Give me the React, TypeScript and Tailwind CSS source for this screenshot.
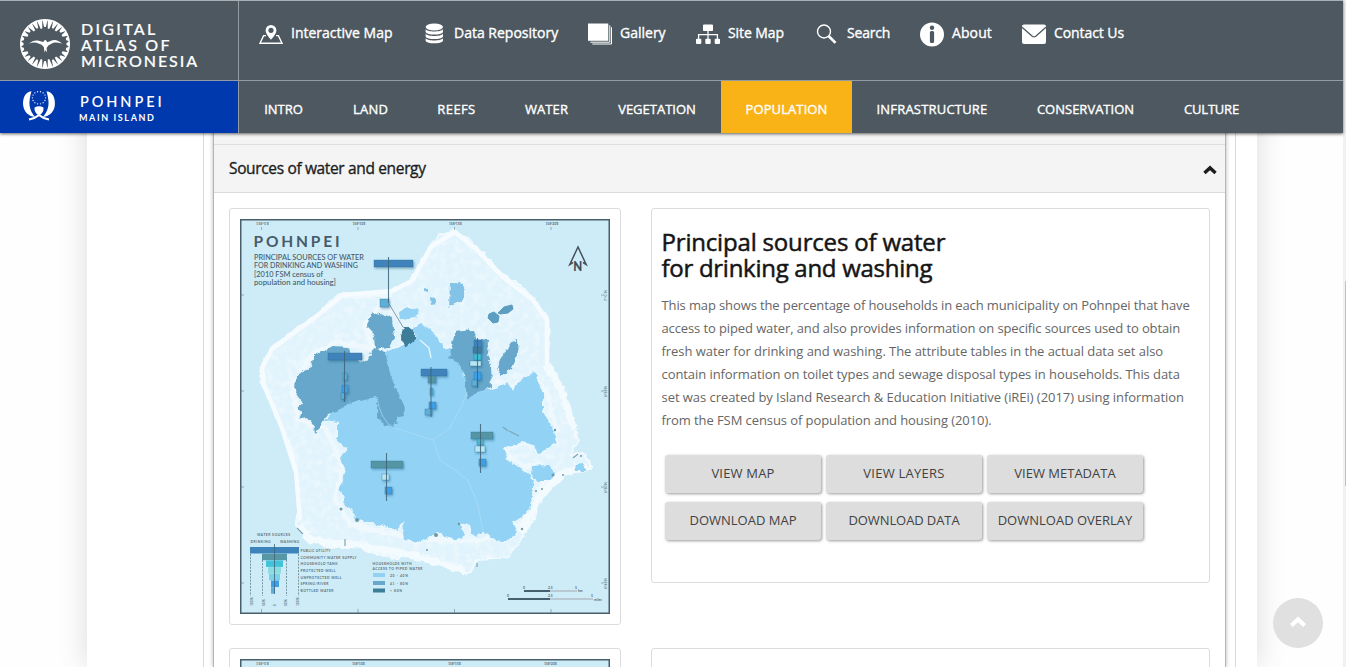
import type { ReactNode } from "react";

const teeth = Array.from({ length: 28 }, (_, i) => {
  const a = (i / 28) * Math.PI * 2;
  const len = 3 + 6 * Math.abs(Math.sin(a)) - (i % 2 ? 1.4 : 0);
  const p = (ang: number, r: number) =>
    `${(26 + Math.cos(ang) * r).toFixed(2)},${(26 + Math.sin(ang) * r).toFixed(2)}`;
  return `${p(a - 0.11, 24.5)} ${p(a + 0.11, 24.5)} ${p(a + 0.05, 24.5 - len)} ${p(a - 0.05, 24.5 - len)}`;
});

function AtlasLogo() {
  return (
    <svg className="h-[52px] w-[52px] shrink-0" viewBox="0 0 52 52" fill="#fff">
      <circle cx="26" cy="26" r="24.4" fill="none" stroke="#fff" strokeWidth="1.2" />
      {teeth.map((t) => (
        <polygon key={t} points={t} />
      ))}
      <path d="M9.5 25.8Q15 21.5 18.8 22.6L24.3 24Q25.6 21.3 27 22.2L28.3 24.2L33.5 22.3Q38 21 43 25.6Q37 23.8 34.4 24.8L29.6 27.2L27.6 30L28.1 34.6L26.5 32L25.6 34.6L24.8 29L22.6 26.8L17.6 24.8Q14 24 9.5 25.8Z" />
    </svg>
  );
}

const stars = Array.from({ length: 14 }, (_, i) => (i / 14) * Math.PI * 2);

function PohnpeiLogo() {
  return (
    <svg className="h-[32px] w-[34px] shrink-0" viewBox="0 0 34 32" fill="#fff">
      <path d="M9.5 1.2C3 1.5 .3 9 1.2 15.6C2 21.5 6 26.3 13 27C9.5 22.5 6.800 17.5 7.600 10.500C8 7 8.600 4 9.500 1.200Z" />
      <path d="M24.500 1.200C31 1.500 33.700 9 32.800 15.600C32 21.500 28 26.300 21 27C24.500 22.500 27.200 17.500 26.400 10.500C26 7 25.400 4 24.500 1.200Z" />
      <path d="M12.500 17.500Q17 15 21.500 17.500Q22 23 17 25.500Q12 23 12.500 17.500Z" />
      <path d="M7 29.500Q13 28.500 17 25Q21 28.500 27 29.500" fill="none" stroke="#fff" strokeWidth="2.200" />
      {stars.map((a) => (
        <circle key={a} cx={17 + Math.cos(a) * 6.6} cy={7.8 + Math.sin(a) * 6.2} r=".65" />
      ))}
    </svg>
  );
}

const icons: Record<string, ReactNode> = {
  map: (
    <>
      <path d="M12 2a5.400 5.400 0 0 0-5.400 5.400c0 3.400 5.400 9.300 5.400 9.300s5.400-5.900 5.400-9.300A5.400 5.400 0 0 0 12 2zm0 7.900a2.600 2.600 0 1 1 0-5.200 2.600 2.600 0 0 1 0 5.200z" fillRule="evenodd" />
      <path d="M7 12.600H4.600L1 20.300H23L19.400 12.600H17" fill="none" stroke="#fff" strokeWidth="1.400" />
    </>
  ),
  data: (
    <>
      <ellipse cx="12.300" cy="4" rx="8.700" ry="3.500" />
      <path d="M3.600 6.200c2 3 15.400 3 17.400 0v2.700c-1 3.500-16.400 3.500-17.400 0z" />
      <path d="M3.600 10.700c2 3 15.400 3 17.400 0v2.700c-1 3.500-16.400 3.500-17.400 0z" />
      <path d="M3.600 15.200c2 3 15.400 3 17.400 0v2.500c-1 3.500-16.400 3.500-17.400 0z" />
    </>
  ),
  gallery: (
    <>
      <path d="M0 .5H20.300V17.800H0z" />
      <path d="M21.800 2.300V19.200H2.300M23.500 4.200V21H4.300" fill="none" stroke="#fff" strokeWidth="1" />
    </>
  ),
  site: (
    <>
      <rect x="7" y="1.500" width="10" height="6.500" rx=".8" />
      <rect x="0" y="15.700" width="5.300" height="5.300" rx="1" />
      <rect x="9.300" y="15.700" width="5.400" height="5.300" rx="1" />
      <rect x="18.700" y="15.700" width="5.300" height="5.300" rx="1" />
      <path d="M12 7.500V16M2.600 16V11.600H21.400V16" fill="none" stroke="#fff" strokeWidth="1.300" />
    </>
  ),
  search: (
    <>
      <circle cx="9" cy="8.500" r="6.500" fill="none" stroke="#fff" strokeWidth="1.400" />
      <path d="M13.800 13.300L20.500 19.900" fill="none" stroke="#fff" strokeWidth="2.700" />
    </>
  ),
  about: (
    <>
      <circle cx="12" cy="11.500" r="12" />
      <circle cx="12" cy="4.700" r="2.200" fill="#4d5860" />
      <rect x="9.900" y="7.900" width="4.200" height="12.100" rx="1.500" fill="#4d5860" />
    </>
  ),
  mail: (
    <>
      <rect x="0" y="1.500" width="24" height="19.500" rx="2" />
      <path d="M0 4.200L10.300 13.300Q12 14.600 13.700 13.300L24 4.200" fill="none" stroke="#4d5860" strokeWidth="1.300" />
    </>
  ),
};

const links = [
  { icon: "map", label: "Interactive Map", cls: "w-[163px]" },
  { icon: "data", label: "Data Repository", cls: "w-[166px]" },
  { icon: "gallery", label: "Gallery", cls: "w-[108px]" },
  { icon: "site", label: "Site Map", cls: "w-[119px] tracking-[-0.07px]" },
  { icon: "search", label: "Search", cls: "w-[105px] tracking-[-0.2px]" },
  { icon: "about", label: "About", cls: "w-[102px] tracking-[0.1px]" },
  { icon: "mail", label: "Contact Us", cls: "tracking-[-0.08px]" },
];

const tabs = [
  { label: "INTRO", cls: "w-[89px]" },
  { label: "LAND", cls: "w-[85px] tracking-[0.2px]" },
  { label: "REEFS", cls: "w-[87px] tracking-[0.4px]" },
  { label: "WATER", cls: "w-[93px] tracking-[0.1px]" },
  { label: "VEGETATION", cls: "w-[128px]" },
  { label: "POPULATION", cls: "w-[131px] bg-[#fab317] tracking-[0.1px]" },
  { label: "INFRASTRUCTURE", cls: "w-[160px] tracking-[0.2px]" },
  { label: "CONSERVATION", cls: "w-[147px]" },
  { label: "CULTURE", cls: "w-[105px] tracking-[-0.2px]" },
];

function Header() {
  return (
    <header className="absolute left-0 top-0 z-10 w-[1343px] border-t border-[#a9b0b5] bg-[#4d5860] text-white shadow-[0_1px_3px_rgba(0,0,0,0.6)]">
      <div className="flex h-[80px] border-b border-[#939ca2]">
        <div className="flex w-[239px] items-start border-r border-[#939ca2] pl-[19px] pt-[17px]">
          <AtlasLogo />
          <div className="ml-[10px] mt-[3px] font-['Lato',sans-serif] text-[16px] font-medium leading-[16px] [-webkit-text-stroke:0.2px_#fff]">
            <div className="tracking-[2.3px]">DIGITAL</div>
            <div className="tracking-[2.2px]">ATLAS OF</div>
            <div className="tracking-[1.95px]">MICRONESIA</div>
          </div>
        </div>
        <nav className="flex items-start pl-[20px] pt-[22px] text-[14px] [-webkit-text-stroke:0.35px_#fff]">
          {links.map((l) => (
            <a key={l.label} className={`flex h-[24px] items-center gap-[8px] whitespace-nowrap ${l.cls}`}>
              <svg className="h-6 w-6 shrink-0 overflow-visible" viewBox="0 0 24 24" fill="#fff">
                {icons[l.icon]}
              </svg>
              <span className="pb-[5px]">{l.label}</span>
            </a>
          ))}
        </nav>
      </div>
      <div className="flex h-[52px]">
        <div className="w-[239px] border-r border-[#939ca2]">
          <div className="flex h-[52px] items-start bg-[#0038ad] pl-[22px] pt-[9px]">
            <PohnpeiLogo />
            <div className="ml-[24px] mt-[3px] font-['Lato',sans-serif]">
              <div className="text-[14.5px] font-semibold leading-[18px] tracking-[2.9px]">POHNPEI</div>
              <div className="-ml-px text-[9px] font-bold leading-[13px] tracking-[1.6px]">MAIN ISLAND</div>
            </div>
          </div>
        </div>
        <nav className="flex text-[13px] [-webkit-text-stroke:0.35px_#fff]">
          {tabs.map((t) => (
            <a key={t.label} className={`flex items-center justify-center pt-[5px] ${t.cls}`}>
              {t.label}
            </a>
          ))}
        </nav>
      </div>
    </header>
  );
}

const REEF =
  "430,247 410,280 392,290 370,295 343,293 330,302 313,318 290,333 270,348 261,368 263,385 273,407 282,428 292,448 296,472 299,498 297,525 308,540 327,547 357,547 373,553 397,558 413,555 430,560 447,568 470,573 478,560 508,558 523,535 535,518 540,498 557,483 567,473 590,470 590,460 580,452 570,455 578,442 575,428 570,408 563,388 553,368 547,365 549,338 548,318 533,298 520,285 503,275 477,248 455,230 440,235";
const ISLAND =
  "373,352 385,352 405,343 417,337 413,328 420,322 425,325 437,337 443,347 450,348 458,360 470,390 490,390 508,382 512,392 523,378 535,372 538,382 543,392 543,412 553,428 557,442 538,455 535,445 522,442 503,448 508,460 527,473 533,482 533,492 528,512 512,522 518,533 503,543 483,532 473,537 470,525 459,523 465,535 457,540 437,533 420,542 405,540 403,522 397,530 373,523 357,520 345,502 340,488 345,472 340,458 347,448 338,443 338,422 325,420 345,398";
const WEST =
  "385,352 393,382 405,408 403,413 393,427 383,424 377,418 377,397 350,403 337,412 328,414 322,422 315,433 313,424 308,418 300,420 303,411 297,408 303,403 295,392 296,375 310,368 314,356 320,352 333,347 348,348 358,360 368,362 373,348";
const EAST =
  "455,332 473,330 475,338 488,340 487,355 491,365 492,388 477,392 467,398 465,375 458,363 449,358";

type Box = [number, number, number, number, string];
const NAVY = "#3f83bb";
const TEAL = "#5796a4";
const SKY = "#5eaed6";
const BLUE = "#3d9fe6";
const PALE = "#b9e6f1";

const boxes: Box[] = [
  [374, 260, 39, 7, NAVY],
  [380, 299, 9, 8, SKY],
  [328, 353, 34, 7, NAVY],
  [343, 373, 4, 7, SKY],
  [342, 385, 6, 8, BLUE],
  [341, 393, 4, 6, SKY],
  [421, 369, 26, 7, NAVY],
  [428, 376, 8, 7, TEAL],
  [430, 388, 3, 7, SKY],
  [429, 402, 7, 7, BLUE],
  [425, 409, 7, 6, SKY],
  [474, 340, 8, 8, NAVY],
  [473, 347, 9, 6, "#427b9a"],
  [474, 354, 7, 6, "#3fbcd4"],
  [470, 361, 11, 5, PALE],
  [474, 372, 7, 8, BLUE],
  [472, 380, 5, 6, SKY],
  [371, 461, 32, 7, TEAL],
  [382, 474, 7, 6, PALE],
  [385, 487, 7, 7, BLUE],
  [471, 432, 22, 7, TEAL],
  [477, 439, 6, 6, "#4fb8cc"],
  [475, 446, 10, 6, PALE],
  [479, 459, 7, 7, BLUE],
];

const stems: [number, number, number][] = [
  [388.5, 257, 303],
  [344.5, 351, 402],
  [431, 367, 417],
  [477.5, 338, 388],
  [386.5, 453, 501],
  [480.5, 424, 473],
];

const legend: [string, number, number, string, number][] = [
  ["PUBLIC UTILITY", 250, 49, NAVY, 30],
  ["COMMUNITY WATER SUPPLY", 262, 25, TEAL, 56],
  ["HOUSEHOLD TANK", 266, 17, "#43c3d9", 37],
  ["PROTECTED WELL", 268, 13, "#8cdde2", 35],
  ["UNPROTECTED WELL", 269, 11, "#7bd0ea", 41],
  ["SPRING/RIVER", 271, 8, BLUE, 28],
  ["BOTTLED WATER", 271, 4, SKY, 33],
];

const classes: [string, string, number][] = [
  ["20 - 40%", "#91d2f3", 573],
  ["41 - 80%", "#66a7cb", 581],
  ["> 80%", "#3c7d97", 588.5],
];

function MapImage() {
  return (
    <svg className="block h-[395px] w-[370px] font-['Lato',sans-serif]" viewBox="240 219 370 395">
      <defs>
        <filter id="coast" x="-5%" y="-5%" width="110%" height="110%">
          <feTurbulence type="fractalNoise" baseFrequency="0.14" numOctaves="3" seed="4" result="n" />
          <feDisplacementMap in="SourceGraphic" in2="n" scale="6" xChannelSelector="R" yChannelSelector="G" />
          <feGaussianBlur stdDeviation=".3" />
        </filter>
        <filter id="shade" x="-30%" y="-30%" width="160%" height="160%">
          <feDropShadow dx="1" dy="1.5" stdDeviation="1.2" floodColor="#1d5b80" floodOpacity=".45" />
        </filter>
        <filter id="grain" x="0" y="0" width="100%" height="100%">
          <feTurbulence type="fractalNoise" baseFrequency="0.15" numOctaves="4" seed="9" />
          <feColorMatrix values="0 0 0 0 .97  0 0 0 0 .99  0 0 0 0 1  0 2.500 0 0 -1.050" />
          <feComposite in2="SourceGraphic" operator="in" />
        </filter>
      </defs>
      <rect x="240" y="219" width="370" height="395" fill="#cdecf8" />
      <g filter="url(#coast)" strokeLinejoin="round">
        <polygon points={REEF} fill="#e1f3fc" stroke="#f3fafe" strokeWidth="2" />
      </g>
      <polygon points={REEF} fill="#fff" filter="url(#grain)" opacity=".45" />
      <path
        d="M345 297L390 293L365 325L372 348L335 342L312 355L292 385L298 420L325 428L335 450L342 470L335 500L350 525L400 535L440 540L480 540L515 530L530 515L545 480L540 465L515 465L505 448L540 440L556 430L548 395L535 375L512 388L495 380"
        fill="none" stroke="#f2fafe" strokeWidth="5" strokeLinejoin="round" opacity=".8" filter="url(#coast)"
      />
      <path
        d="M300 520L296 472L282 428L264 385L262 368L272 349L313 319L343 295L392 291L412 281L431 247L455 232L477 250L503 277L533 300L547 320L547 365"
        fill="none" stroke="#f5fbfe" strokeWidth="4.5" strokeLinejoin="round"
      />
      <path
        d="M547 365L562 392L575 430M299 525L310 540L357 545L413 555L465 571M520 533L538 500L560 474L588 466"
        fill="none" stroke="#f4fbfe" strokeWidth="7" strokeLinejoin="round" filter="url(#coast)"
      />
      <g filter="url(#coast)" strokeLinejoin="round">
        <polygon points={ISLAND} fill="#91d2f5" stroke="#e9f7fe" strokeWidth="3" paintOrder="stroke" />
        <polygon points="531,466 549,465 555,473 550,481 537,481 530,475" fill="#91d2f5" />
        <polygon points="575,465 583,464 587,471 576,471" fill="#91d2f5" />
        <polygon points="398,312 408,307 418,311 415,317 401,319" fill="#91d2f5" />
        <polygon points="450,284 461,282 465,290 463,300 449,307" fill="#84c3e8" />
        <polygon points="430,297 435,298 437,303 431,304" fill="#84c3e8" />
        <polygon points="424,288 428,289 428,292 424,291" fill="#84c3e8" />
        <polygon points={WEST} fill="#66a7cb" />
        <polygon points="368,318 373,312 392,318 394,338 388,348 375,350 374,335 367,328" fill="#66a7cb" />
        <polygon points="402,330 406,326 415,332 415,340 407,347 401,341" fill="#3c7d97" />
        <polygon points={EAST} fill="#66a7cb" />
        <polygon points="517,340 518,355 512,368 502,375 497,368 505,352 512,342" fill="#66a7cb" />
      </g>
      <path d="M489 314L494 312L499 316L498 322L493 323L488 318ZM498 313L504 307L512 305L513 309L508 313L500 314Z" fill="#5c9dc2" stroke="#5c9dc2" strokeLinejoin="round" />
      <path
        d="M377 397Q380 420 394 428L433 440L450 428L462 405L467 392M433 440L440 460L452 468L468 480L478 505L483 532"
        fill="none" stroke="#b4e0f6" strokeWidth=".8" opacity=".8"
      />
      <path d="M420 340L429 348L431 358" fill="none" stroke="#dff2fc" strokeWidth="1.5" />
      <g fill="#6f9aa5">
        <circle cx="341" cy="509" r="1.5" /><circle cx="357" cy="520" r="2" /><circle cx="436" cy="535" r="2" />
        <circle cx="522" cy="529" r="1.2" /><circle cx="536" cy="491" r="1" /><circle cx="542" cy="489" r="1" />
        <circle cx="553" cy="475" r="1.5" /><circle cx="555" cy="430" r="1.2" /><circle cx="563" cy="475" r="1" />
        <circle cx="459" cy="524" r="1.3" /><circle cx="581" cy="456" r="1" /><circle cx="427" cy="550" r="1" />
      </g>
      <path d="M503 427L508 431M509 431L519 436M573 458L578 454M297 528L303 534M345 539V546M477 563V567" stroke="#7ea5b3" strokeWidth="1.2" />
      <path d="M388.5 303L403 327" stroke="#8c9ba5" strokeWidth="1" />
      <g filter="url(#shade)">
        {boxes.map(([x, y, w, h, c]) => (
          <rect key={`${x}-${y}`} x={x} y={y} width={w} height={h} fill={c} stroke="#2d6f9d" strokeOpacity=".55" strokeWidth=".6" />
        ))}
      </g>
      {stems.map(([x, a, b]) => (
        <path key={x} d={`M${x} ${a}V${b}`} stroke="#3f6479" strokeWidth="1.1" opacity=".85" />
      ))}

      <g fill="#475b69">
        <text x="253.5" y="247" fontSize="15.5" fontWeight="700" textLength="86">POHNPEI</text>
        <g fontSize="7.3" fontWeight="500">
          <text x="254" y="259.5" textLength="110" lengthAdjust="spacingAndGlyphs">PRINCIPAL SOURCES OF WATER</text>
          <text x="254" y="268" textLength="104" lengthAdjust="spacingAndGlyphs">FOR DRINKING AND WASHING</text>
          <text x="254" y="276.5" textLength="69" lengthAdjust="spacingAndGlyphs">[2010 FSM census of</text>
          <text x="254" y="285" textLength="82" lengthAdjust="spacingAndGlyphs">population and housing]</text>
        </g>
      </g>
      <path d="M573 262.5L569.8 264.5L578 247L586.200 264.500L583 262.500" fill="none" stroke="#45525c" strokeWidth="1.5" />
      <text x="573.3" y="271" fontSize="12.5" fontWeight="900" fill="#3f4c55" textLength="9" lengthAdjust="spacingAndGlyphs">N</text>

      <g fill="#5b6f7a" fontSize="3.4" fontWeight="700">
        {["158°5'E", "158°10'E", "158°15'E", "158°20'E"].map((t, i) => (
          <g key={t}>
            <text x={256 + i * 96.5} y="224.5" textLength="13">{t}</text>
            <path d={`M${261.5 + i * 96.5} 227V230M${261.5 + i * 96.5} 609V613`} stroke="#7d929e" strokeWidth=".7" />
          </g>
        ))}
        {["7°0'N", "6°55'N", "6°50'N", "6°45'N"].map((t, i) => (
          <g key={t}>
            <text transform={`translate(607 ${301 + i * 96}) rotate(-90)`} textLength="11">{t}</text>
            <path d={`M240 ${295 + i * 96}H244M601 ${295 + i * 96}H604`} stroke="#7d929e" strokeWidth=".7" />
          </g>
        ))}
        <text x="257" y="535.5" textLength="33">WATER SOURCES</text>
        <text x="250.5" y="542.5" textLength="20">DRINKING</text>
        <text x="280" y="542.5" textLength="19">WASHING</text>
        {legend.map(([t, x, w, c, len], i) => (
          <g key={t}>
            <rect x={x} y={547 + i * 6.7} width={w} height="6.5" fill={c} />
            <text x="300.5" y={552 + i * 6.65} textLength={len}>{t}</text>
          </g>
        ))}
        <path d="M274.5 544V594" stroke="#3f6479" strokeWidth=".8" />
        <path d="M250.5 554V596M262.5 560V596M286.5 560V596M298.5 554V596" stroke="#54707f" strokeWidth=".7" strokeDasharray="2 1.2" />
        {[["100%", 253], ["50%", 265], ["0", 276], ["50%", 287], ["100%", 299]].map(([t, x]) => (
          <text key={x} transform={`translate(${x} 606) rotate(-90)`}>{t}</text>
        ))}
        <text x="372.5" y="565" textLength="39">HOUSEHOLDS WITH</text>
        <text x="372.5" y="569.5" textLength="50">ACCESS TO PIPED WATER</text>
        {classes.map(([t, c, y]) => (
          <g key={t}>
            <rect x="373" y={y} width="12" height="4" fill={c} />
            <text x="390" y={y + 3.5} textLength={t === "> 80%" ? 12 : 18}>{t}</text>
          </g>
        ))}
        <path d="M524 591H550M508 599H550" stroke="#46606f" strokeWidth="2" />
        <path d="M550 591H577M550 599H593" stroke="#b9c9d4" strokeWidth="2" />
        <text x="523" y="589">0</text><text x="548" y="589">2.5</text><text x="575" y="589">5</text><text x="578" y="592">km</text>
        <text x="507" y="597">0</text><text x="548" y="597">2.5</text><text x="591" y="597">5</text><text x="594" y="600.5">miles</text>
      </g>
      <rect x="240.75" y="219.75" width="368.5" height="393.5" fill="none" stroke="#4a5f6c" strokeWidth="1.5" />
    </svg>
  );
}

const paragraph = [
  { t: "This map shows the percentage of households in each municipality on Pohnpei that have", cls: "tracking-[-0.115px]" },
  { t: "access to piped water, and also provides information on specific sources used to obtain", cls: "tracking-[-0.11px]" },
  { t: "fresh water for drinking and washing. The attribute tables in the actual data set also", cls: "tracking-[-0.05px]" },
  { t: "contain information on toilet types and sewage disposal types in households. This data", cls: "tracking-[-0.07px]" },
  { t: "set was created by Island Research & Education Initiative (iREi) (2017) using information", cls: "tracking-[-0.05px]" },
  { t: "from the FSM census of population and housing (2010).", cls: "tracking-[-0.08px]" },
];

const actions = [
  { t: "VIEW MAP", cls: "tracking-[0.18px]" },
  { t: "VIEW LAYERS", cls: "tracking-[0.24px]" },
  { t: "VIEW METADATA", cls: "" },
  { t: "DOWNLOAD MAP", cls: "" },
  { t: "DOWNLOAD DATA", cls: "tracking-[-0.1px]" },
  { t: "DOWNLOAD OVERLAY", cls: "" },
];

function Chevron({ className }: { className: string }) {
  return (
    <svg className={className} viewBox="0 0 14 10" fill="currentColor">
      <path d="M7 .5L13.7 6.7L11.4 9.2L7 5.3L2.6 9.2L.3 6.7Z" />
    </svg>
  );
}

export default function App() {
  return (
    <div className="relative flex h-[667px] w-[1346px] overflow-hidden bg-white font-['Open_Sans',sans-serif]">
      <Header />
      <div className="flex w-[1343px] bg-[#fefefe] pl-[87px]">
        <div className="flex h-full w-[1170px] bg-white pl-[116px] shadow-[0_0_28px_rgba(0,0,0,0.14)]">
          <div className="flex h-full w-[1033px] border-x border-[#d9d9d9] pl-[9px]">
            <main className="flex h-full w-[1013px] flex-col border-x border-[#b5b5b5] bg-white shadow-[0_0_4px_rgba(0,0,0,0.3)]">
              <div className="h-[145px] shrink-0 border-b border-[#dedede] bg-[#f4f4f4]" />
              <div className="flex h-[48px] shrink-0 items-center justify-between border-b border-[#dadada] bg-[#f4f4f4] pl-[15px] pr-[8px] text-[#1d1d1d]">
                <h2 className="text-[15.5px] tracking-[-0.35px] [-webkit-text-stroke:0.35px_#1d1d1d]">Sources of water and energy</h2>
                <Chevron className="mt-[3px] h-[10px] w-[14px]" />
              </div>
              <div className="flex gap-[30px] pl-[15px] pt-[15px]">
                <div className="h-[417px] w-[392px] shrink-0 rounded-[3px] border border-[#dcdcdc] p-[10px]">
                  <MapImage />
                </div>
                <section className="h-[375px] w-[559px] shrink-0 rounded-[3px] border border-[#dcdcdc] pl-[9.5px] pt-[20px]">
                  <h3 className="text-[24px] leading-[26px] text-[#151515] [-webkit-text-stroke:0.5px_#151515]">
                    <div className="tracking-[-0.18px]">Principal sources of water</div>
                    <div className="tracking-[-0.28px]">for drinking and washing</div>
                  </h3>
                  <div className="mt-[13px] whitespace-nowrap text-[13px] leading-[23px] text-[#666]">
                    {paragraph.map((l) => (
                      <div key={l.t} className={l.cls}>{l.t}</div>
                    ))}
                  </div>
                  <div className="ml-[3.5px] mt-[23px] grid grid-cols-[156px_156px_156px] gap-x-[5px] gap-y-[9px]">
                    {actions.map((a) => (
                      <button
                        key={a.t}
                        className={`h-[38px] whitespace-nowrap rounded-[3px] bg-[#dddddd] text-[13px] text-[#424242] shadow-[1px_1px_3px_rgba(0,0,0,0.4)] ${a.cls}`}
                      >
                        {a.t}
                      </button>
                    ))}
                  </div>
                </section>
              </div>
              <div className="mt-[23px] flex gap-[30px] pl-[15px]">
                <div className="h-[417px] w-[392px] shrink-0 rounded-[3px] border border-[#dcdcdc] p-[10px]">
                  <svg className="block h-[395px] w-[370px] font-['Lato',sans-serif]" viewBox="0 0 370 395">
                    <rect x=".75" y=".75" width="368.5" height="393.5" fill="#cdecf8" stroke="#4a5f6c" strokeWidth="1.5" />
                    <g fill="#5b6f7a" fontSize="3.4" fontWeight="700">
                      <text x="16" y="5.5" textLength="13">158°5'E</text>
                      <text x="112" y="5.5" textLength="13">158°10'E</text>
                      <text x="208" y="5.5" textLength="13">158°15'E</text>
                      <text x="304" y="5.5" textLength="13">158°20'E</text>
                    </g>
                  </svg>
                </div>
                <section className="h-[375px] w-[559px] shrink-0 rounded-[3px] border border-[#dcdcdc]" />
              </div>
            </main>
          </div>
        </div>
      </div>
      <div className="w-[3px] bg-[#f1f1f1] pl-[2px] pt-[281px]">
        <div className="h-[205px] bg-[#c1c1c1]" />
      </div>
      <button className="absolute left-[1273px] top-[598px] flex h-[50px] w-[50px] items-center justify-center rounded-full bg-[#e0e0e0] text-white">
        <Chevron className="-mt-[3px] h-[12px] w-[18px]" />
      </button>
    </div>
  );
}
